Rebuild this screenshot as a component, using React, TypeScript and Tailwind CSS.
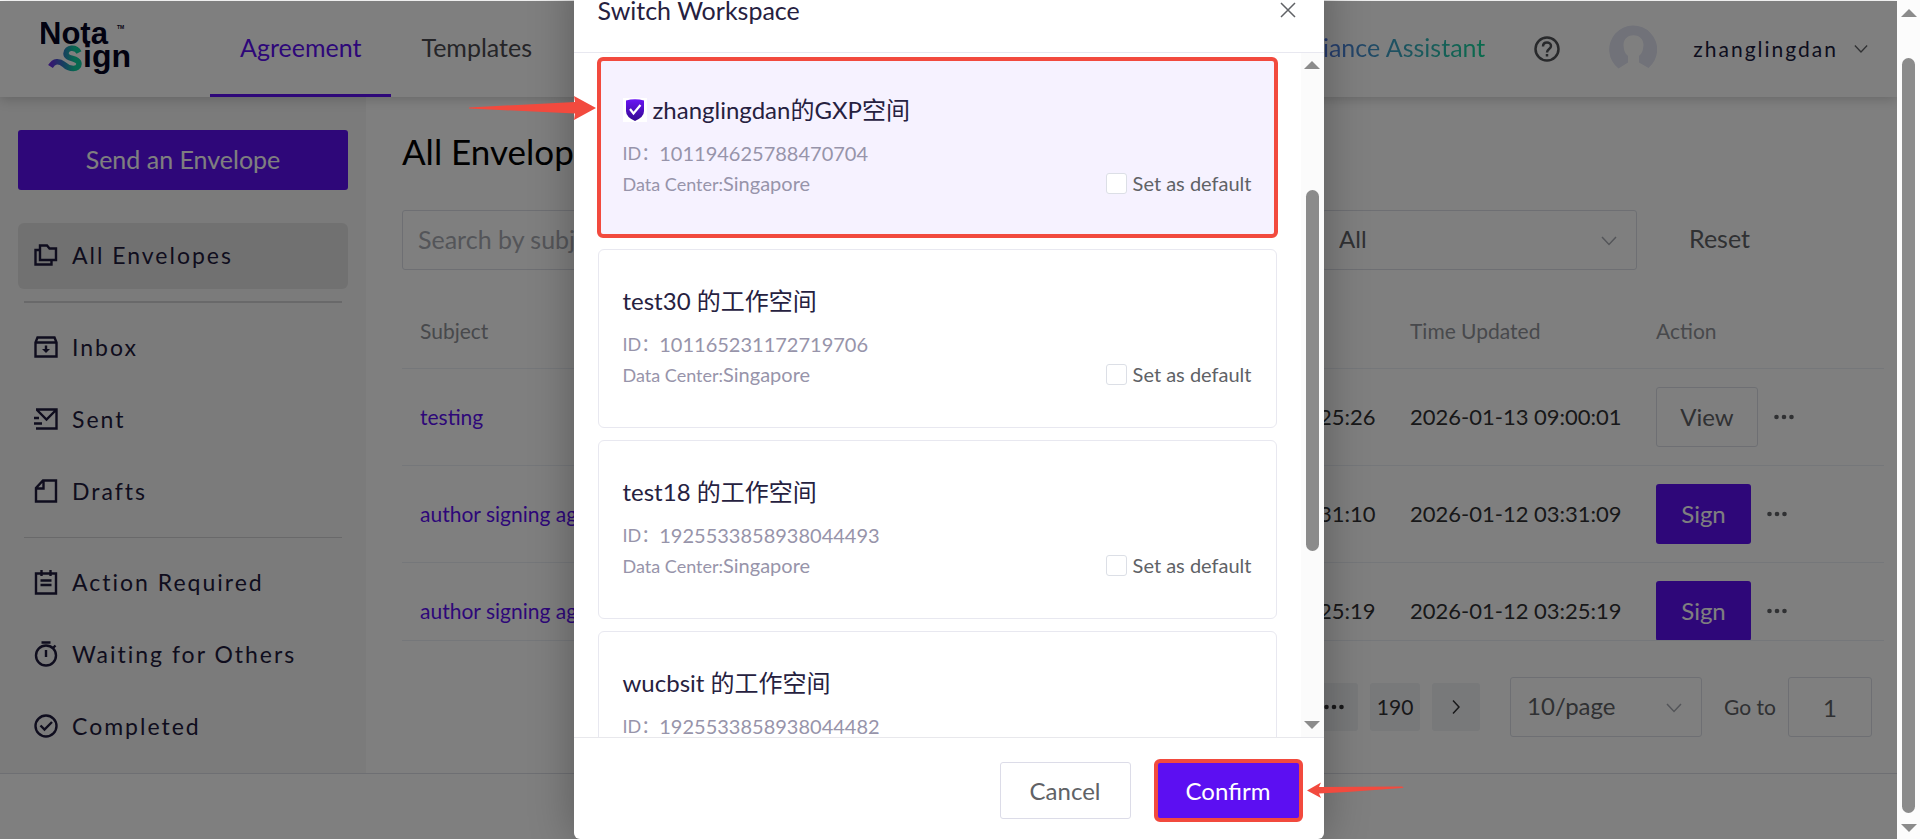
import React from 'react';

interface Workspace {
  name: string;
  id: string;
  center: string;
  verified?: boolean;
}

const workspaces: Workspace[] = [
  { name: 'zhanglingdan的GXP空间', id: '101194625788470704', center: 'Singapore', verified: true },
  { name: 'test30 的工作空间', id: '101165231172719706', center: 'Singapore' },
  { name: 'test18 的工作空间', id: '1925533858938044493', center: 'Singapore' },
  { name: 'wucbsit 的工作空间', id: '1925533858938044482', center: 'Singapore' },
];

const envelopes = [
  { subject: 'testing', created: '2026-01-12 09:25:26', updated: '2026-01-13 09:00:01', action: 'View' },
  { subject: 'author signing agreement', created: '2026-01-12 03:31:10', updated: '2026-01-12 03:31:09', action: 'Sign' },
  { subject: 'author signing agreement', created: '2026-01-12 03:25:19', updated: '2026-01-12 03:25:19', action: 'Sign' },
];

/* ---------- icons ---------- */

const Icon: React.FC<{ children: React.ReactNode }> = ({ children }) => (
  <svg className="w-6 h-7 shrink-0" viewBox="0 0 24 28" fill="none" stroke="currentColor" strokeWidth="2.4">
    {children}
  </svg>
);

const FoldersIcon = () => (
  <Icon>
    <path d="M6 4.500h7l2.500 3H22v11.500H6z" />
    <path d="M6 9H1.500v14.500h16V19" />
  </Icon>
);

const InboxIcon = () => (
  <Icon>
    <path d="M1.500 9.500v14h21v-14l-2-5h-17zM1.500 9.500h21" />
    <path d="M12 12.500v5" />
    <path d="M8 16h8l-4 4z" fill="currentColor" stroke="none" />
  </Icon>
);

const SentIcon = () => (
  <Icon>
    <path d="M2 4.500h20.500v19H2M3 5l9.500 9.500L22 5" />
    <path d="M-1 13h6M-1 18.500h9" />
  </Icon>
);

const DraftsIcon = () => (
  <Icon>
    <path d="M9 3.500h13v21H2V11zM9.500 4v7.500H2.500" />
  </Icon>
);

const NotepadIcon = () => (
  <Icon>
    <path d="M2 5.500h20v20H2zM7.500 2v6M16.500 2v6M6.500 12.500h11M6.500 17h11" />
  </Icon>
);

const TimerIcon = () => (
  <Icon>
    <circle cx="12" cy="15.500" r="10" />
    <path d="M7.500 2.500h9M12 10v7M19 8l2.500-2.500" />
  </Icon>
);

const CheckCircleIcon = () => (
  <Icon>
    <circle cx="12" cy="14" r="10.500" />
    <path d="M6.500 13.500l4 4 7.500-7.500" />
  </Icon>
);

const ChevronDown: React.FC<{ className?: string }> = ({ className = '' }) => (
  <svg className={`w-4 h-[10px] ${className}`} viewBox="0 0 16 10" fill="none" stroke="currentColor" strokeWidth="1.500">
    <path d="M1 1l7 7.500L15 1" />
  </svg>
);

const Dots = () => (
  <svg className="w-5 h-2" viewBox="0 0 20 8" fill="currentColor">
    <circle cx="2.500" cy="4" r="2.300" />
    <circle cx="10" cy="4" r="2.300" />
    <circle cx="17.500" cy="4" r="2.300" />
  </svg>
);

const Triangle: React.FC<{ down?: boolean }> = ({ down }) => (
  <svg className="w-4 h-2 shrink-0" viewBox="0 0 16 8" fill="#8b8b8b">
    <path d={down ? 'M0 0h16L8 8z' : 'M0 8h16L8 0z'} />
  </svg>
);

const Logo = () => (
  <svg className="w-[100px] h-[64px]" viewBox="0 0 100 64" role="img" aria-label="Nota Sign">
    <defs>
      <linearGradient id="logoWave" gradientUnits="userSpaceOnUse" x1="10" y1="0" x2="38" y2="0">
        <stop offset="0" stopColor="#6a2fe0" />
        <stop offset="0.45" stopColor="#2e7fc0" />
        <stop offset="0.85" stopColor="#0fd0a0" />
      </linearGradient>
    </defs>
    <g fill="#050522" fontFamily="'Liberation Sans', sans-serif" fontWeight="700">
      <text x="-2" y="27" fontSize="31">Nota</text>
      <text x="76" y="12" fontSize="5">TM</text>
      <text x="42" y="50" fontSize="32">ign</text>
    </g>
    <path
      d="M38 35.500C35 29.500 25 30 25 36.500C25 43 38 40 38 47C38 53 28 52.500 23 47.500C18 43.500 13 43.500 9.500 49.500"
      fill="none"
      stroke="url(#logoWave)"
      strokeWidth="5.500"
    />
  </svg>
);

const HelpIcon = () => (
  <svg className="w-[26px] h-[26px]" viewBox="0 0 26 26" fill="none" stroke="#505256" strokeWidth="2.500">
    <circle cx="13" cy="13" r="11.500" />
    <path d="M9 10.500c0-5.500 8-5 8-.5 0 3-4 3-4 6.500" />
    <path d="M13 18v2.500" />
  </svg>
);

const Avatar = () => (
  <svg className="w-12 h-12" viewBox="0 0 48 48">
    <path d="M9.500 43.500A24 24 0 1 1 39.500 43L30 37.500V31C33.500 28 34 25 34.500 20C34.500 7 14.500 7 14.500 20C15 25 15.500 28 19 31V37.500z" fill="#e2e4f2" />
  </svg>
);

const ShieldIcon = () => (
  <span className="flex items-center justify-center w-6 h-6 bg-white">
    <svg className="w-[18px] h-[22px]" viewBox="0 0 18 22">
      <defs>
        <linearGradient id="shield" x1="0" y1="0" x2="0" y2="1">
          <stop offset="0" stopColor="#6a14f5" />
          <stop offset="1" stopColor="#32078f" />
        </linearGradient>
      </defs>
      <path d="M0 1.500Q9-1 18 1.500V12Q18 18 9 22Q0 18 0 12z" fill="url(#shield)" />
      <path d="M4 10l3.500 4.500L14.500 6" fill="none" stroke="#fff" strokeWidth="2.200" />
    </svg>
  </span>
);

/* ---------- page ---------- */

const Header = () => (
  <header className="relative z-10 flex items-center h-24 bg-white shadow-[0_2px_12px_rgba(0,0,0,0.2)]">
    <div className="w-[210px] pl-[41px]">
      <Logo />
    </div>
    <nav className="flex h-full text-[25px]">
      <a href="#agreement" className="flex items-center px-[30px] border-b-[3px] border-[#5c0ff2] text-[#5c0ff2]">
        Agreement
      </a>
      <a href="#templates" className="flex items-center px-[30px] border-b-[3px] border-transparent text-[#4a4a50]">
        Templates
      </a>
    </nav>
    <div className="flex items-center ml-auto pr-[29px]">
      <a href="#assistant" className="pb-[3px] text-[25px] bg-gradient-to-r from-[#5a2ff0] to-[#0fd698] bg-clip-text text-transparent">
        Compliance Assistant
      </a>
      <button aria-label="Help" className="mx-[49px]">
        <HelpIcon />
      </button>
      <Avatar />
      <button className="flex items-center gap-4 ml-9 text-[21px] tracking-[2px] text-[#1a1a3c]">
        zhanglingdan
        <ChevronDown className="w-[14px] text-[#606266]" />
      </button>
    </div>
  </header>
);

const NavItem: React.FC<{ icon: React.ReactNode; label: string; active?: boolean }> = ({ icon, label, active }) => (
  <li className="py-[3px]">
    <a
      href="#folder"
      className={`flex items-center gap-[14px] h-[66px] pb-[2px] pl-4 rounded-md text-[23px] tracking-[2px] text-[#1e1a3c] ${active ? 'bg-[#e3e3e3]' : ''}`}
    >
      {icon}
      {label}
    </a>
  </li>
);

const Sidebar = () => (
  <aside className="w-[366px] shrink-0 bg-[#f6f6f6] px-[18px] pt-[33px]">
    <button className="w-full h-[60px] rounded-[3px] bg-[#5c0ff2] text-white text-[25px]">Send an Envelope</button>
    <ul className="mt-[30px]">
      <NavItem icon={<FoldersIcon />} label="All Envelopes" active />
      <li className="h-[2px] mx-[6px] my-[9px] bg-[#d2d2d4]" />
      <NavItem icon={<InboxIcon />} label="Inbox" />
      <NavItem icon={<SentIcon />} label="Sent" />
      <NavItem icon={<DraftsIcon />} label="Drafts" />
      <li className="h-px mx-[6px] my-[9px] bg-[#d2d2d4]" />
      <NavItem icon={<NotepadIcon />} label="Action Required" />
      <NavItem icon={<TimerIcon />} label="Waiting for Others" />
      <NavItem icon={<CheckCircleIcon />} label="Completed" />
    </ul>
  </aside>
);

const Select: React.FC<{ label: string; value: string; className: string }> = ({ label, value, className }) => (
  <div className={`relative h-[60px] ${className}`}>
    <select
      aria-label={label}
      className="w-full h-full pl-4 pb-[2px] appearance-none border border-[#dcdfe6] rounded-[3px] bg-white text-2xl text-[#606266]"
    >
      <option>{value}</option>
    </select>
    <ChevronDown className="absolute right-5 top-[26px] text-[#a8abb2]" />
  </div>
);

const EnvelopeTable = () => (
  <div className="h-[347px] mt-6 overflow-hidden border-b border-[#ebeef5]">
    <table className="w-full table-fixed text-[21px] text-left">
      <thead>
        <tr className="h-[74px] border-b border-[#ebeef5] text-[#909399]">
          <th className="pl-[18px] font-normal">Subject</th>
          <th className="pl-[18px] font-normal">Status</th>
          <th className="w-[246px] pl-[18px] font-normal">Time Created</th>
          <th className="w-[246px] pl-[18px] font-normal">Time Updated</th>
          <th className="w-[246px] pl-[18px] font-normal">Action</th>
        </tr>
      </thead>
      <tbody>
        {envelopes.map((row) => (
          <tr key={row.updated} className="h-[97px] border-b border-[#ebeef5] text-[#303133]">
            <td className="pl-[18px] truncate">
              <a href="#envelope" className="text-[#5c0ff2]">{row.subject}</a>
            </td>
            <td />
            <td className="pl-[18px] text-[22px]">{row.created}</td>
            <td className="pl-[18px] text-[22px]">{row.updated}</td>
            <td className="pl-[18px]">
              <div className="flex items-center gap-4">
                {row.action === 'View' ? (
                  <button className="w-[102px] h-[60px] border border-[#dcdfe6] rounded-[3px] text-2xl text-[#606266]">View</button>
                ) : (
                  <button className="w-[95px] h-[60px] rounded-[3px] bg-[#5c0ff2] text-2xl text-white">Sign</button>
                )}
                <button aria-label="More" className="text-[#606266]"><Dots /></button>
              </div>
            </td>
          </tr>
        ))}
      </tbody>
    </table>
  </div>
);

const Pagination = () => (
  <div className="flex items-center justify-end gap-3 mt-9 pb-9 pr-3 text-[21px] text-[#303133]">
    <button aria-label="More pages" className="flex items-center justify-center w-12 h-12 rounded-[3px] bg-[#f0f2f5]"><Dots /></button>
    <button className="w-[50px] h-12 rounded-[3px] bg-[#f0f2f5]">190</button>
    <button aria-label="Next page" className="flex items-center justify-center w-12 h-12 rounded-[3px] bg-[#f0f2f5]">
      <svg className="w-2 h-4" viewBox="0 0 8 16" fill="none" stroke="currentColor" strokeWidth="1.500">
        <path d="M1 1.500L7 8l-6 6.500" />
      </svg>
    </button>
    <Select label="Page size" value="10/page" className="w-48 mx-[18px]" />
    <label htmlFor="goto" className="-ml-2 text-[#606266]">Go to</label>
    <input id="goto" defaultValue="1" className="w-[84px] h-[60px] border border-[#dcdfe6] rounded-[3px] text-2xl text-center text-[#606266]" />
  </div>
);

const Content = () => (
  <section className="flex-1 min-w-0 pl-9 pr-[13px] pt-[30px]">
    <h1 className="text-[35px] leading-[48px] text-black">All Envelopes</h1>
    <div className="flex items-center mt-[35px]">
      <input
        aria-label="Search"
        placeholder="Search by subject"
        className="flex-1 min-w-0 h-[60px] pl-[15px] pb-[2px] border border-[#dcdfe6] rounded-[3px] text-[25px] placeholder:text-[#a8abb2]"
      />
      <Select label="Sender" value="All" className="w-[313px] ml-6" />
      <Select label="Status" value="All" className="w-[315px] ml-6" />
      <button className="ml-[52px] mr-[134px] pb-[2px] text-[25px] text-[#606266]">Reset</button>
    </div>
    <EnvelopeTable />
    <Pagination />
  </section>
);

/* ---------- dialog ---------- */

const WorkspaceCard: React.FC<{ item: Workspace; selected?: boolean }> = ({ item, selected }) => (
  <article
    className={`relative pt-[33px] pb-[38px] px-6 border border-[#e8e8f0] rounded-md ${selected ? 'bg-[#f6f2ff]' : 'bg-white'}`}
  >
    {selected && <div className="absolute -inset-[2px] border-4 border-[#f24a3e] rounded-md" />}
    <h3 className="flex items-center gap-[6px] h-9 text-2xl leading-9 text-[#26213f]">
      {item.verified && <ShieldIcon />}
      {item.name}
    </h3>
    <p className="flex items-center h-[30px] mt-[10px] text-[#9794aa]">
      <span className="text-lg leading-[30px]">ID：</span>
      <span className="text-xl leading-[30px]">{item.id}</span>
    </p>
    <div className="flex items-center justify-between h-[30px] text-[#9794aa]">
      <p className="flex items-baseline">
        <span className="text-lg leading-[30px]">Data Center:</span>
        <span className="text-xl leading-[30px]">{item.center}</span>
      </p>
      <label className="flex items-center gap-[6px] text-xl leading-[30px] text-[#606266]">
        <input type="checkbox" className="w-[21px] h-[21px] appearance-none border border-[#dcdfe6] rounded-[3px] bg-white" />
        Set as default
      </label>
    </div>
  </article>
);

const SwitchWorkspaceDialog = () => (
  <div
    role="dialog"
    aria-label="Switch Workspace"
    className="relative flex flex-col w-[750px] h-[calc(100vh+32px)] bg-white rounded-md shadow-[0_0_45px_rgba(0,0,0,0.3)]"
  >
    <div className="flex items-center justify-between h-[85px] shrink-0 pl-6 pr-7 border-b border-[#e8e8f0]">
      <h2 className="text-[25px] leading-9 text-[#26213f]">Switch Workspace</h2>
      <button aria-label="Close" className="text-[#606266]">
        <svg className="w-4 h-4" viewBox="0 0 16 16" stroke="currentColor" strokeWidth="1.500">
          <path d="M1 1l14 14M15 1L1 15" />
        </svg>
      </button>
    </div>

    <div className="flex flex-1 min-h-0">
      <div className="flex flex-col flex-1 gap-3 overflow-hidden pt-[5px] pl-6 pr-6">
        {workspaces.map((item, i) => (
          <WorkspaceCard key={item.id} item={item} selected={i === 0} />
        ))}
      </div>
      <div className="flex flex-col items-center w-[23px] py-2 bg-[#fbfbfb]">
        <Triangle />
        <div className="w-[13px] h-[361px] mt-[121px] mb-auto rounded-full bg-[#8b8b8b]" />
        <Triangle down />
      </div>
    </div>

    <div className="flex justify-end gap-[26px] h-[102px] shrink-0 pt-6 pr-6 border-t border-[#e8e8ec]">
      <button className="w-[131px] h-[57px] border border-[#dcdce8] rounded-[3px] text-2xl text-[#606266]">Cancel</button>
      <button className="relative w-[143px] h-[57px] rounded-[3px] bg-[#5c0ff2] text-2xl text-white">
        Confirm
        <span className="absolute -inset-[3px] border-4 border-[#f24a3e] rounded-md" />
      </button>
    </div>

    {/* callout arrows */}
    <svg className="absolute top-[128px] -left-[105px] w-[127px] h-6" viewBox="0 0 127 24" fill="#f24a3e">
      <path d="M0 11.500L106 6L105 0L127 12L105 24L106 17.500L0 12.500z" />
    </svg>
    <svg className="absolute bottom-[41px] -right-[80px] w-[97px] h-4" viewBox="0 0 97 16" fill="#f24a3e">
      <path d="M0 8.500L14 0.500L12 5L95 4.500Q98 5.500 95 6L40 10L12 11.500L14 16z" />
    </svg>
  </div>
);

const App: React.FC = () => {
  return (
    <div className="flex h-screen overflow-hidden bg-white font-[Lato,'Noto_Sans_CJK_SC',sans-serif]">
      <div className="relative flex-1 min-w-0 pt-px overflow-hidden">
        <Header />
        <main className="flex">
          <Sidebar />
          <Content />
        </main>
        <footer className="h-20 border-t border-[#dcdfe6]" />

        <div className="absolute inset-x-0 top-px bottom-0 z-20 bg-black/50" />
        <div className="absolute inset-0 z-30 flex items-end justify-center overflow-hidden">
          <SwitchWorkspaceDialog />
        </div>
      </div>

      {/* page scrollbar */}
      <div className="flex flex-col items-center w-[23px] shrink-0 pt-[9px] pb-[7px] bg-[#fcfcfc]">
        <Triangle />
        <div className="flex-1 w-[13px] mt-[41px] mb-[11px] rounded-full bg-[#8b8b8b]" />
        <Triangle down />
      </div>
    </div>
  );
};

export default App;
